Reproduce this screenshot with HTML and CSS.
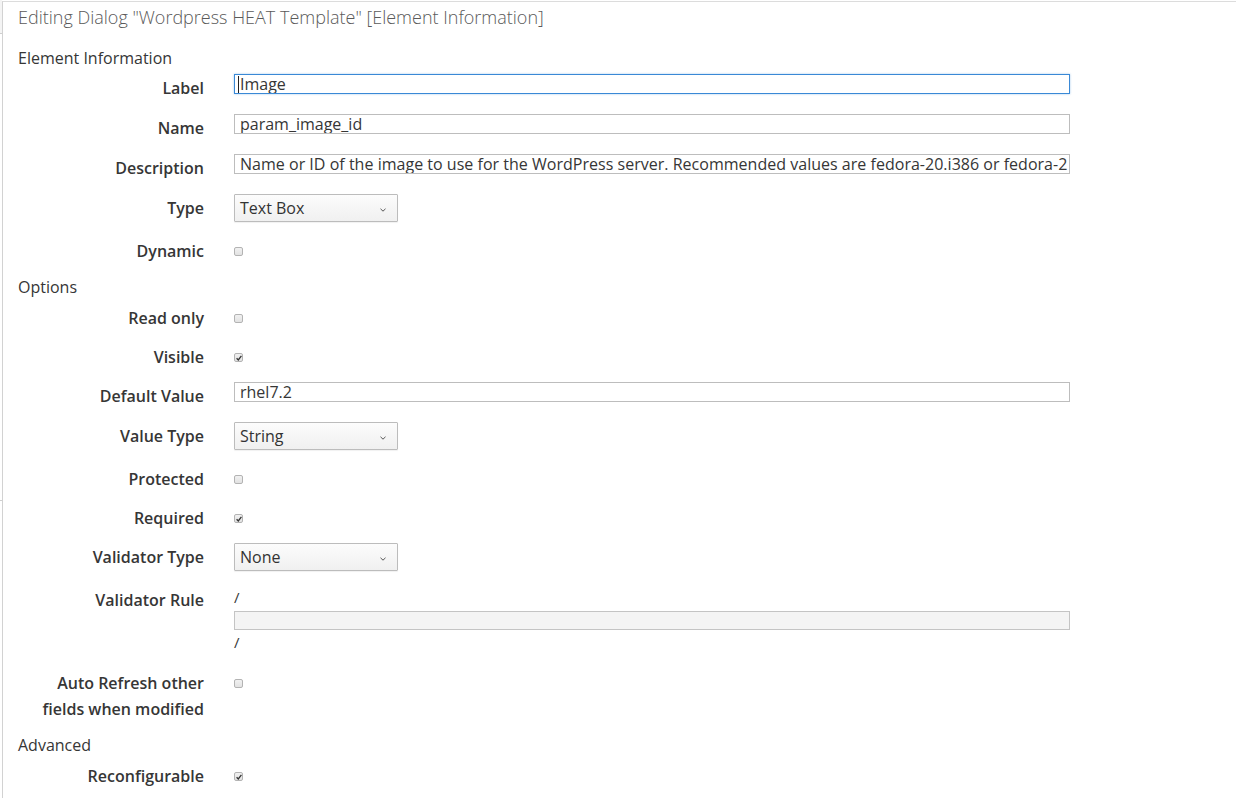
FILE: index.html
```html
<!DOCTYPE html>
<html lang="en">
<head>
<meta charset="utf-8">
<title>Editing Dialog</title>
<link rel="stylesheet" href="styles.css">
</head>
<body>
<div class="page">
  <div class="edge"><div class="edge-a"></div><div class="edge-b"></div></div>
  <main class="panel">
    <h1 class="title">Editing Dialog "Wordpress HEAT Template" [Element Information]</h1>

    <h2 class="section first">Element Information</h2>
    <div class="row text"><div class="lbl">Label</div><div class="ctl"><div class="field focus"><span class="caret"></span>Image</div></div></div>
    <div class="row text"><div class="lbl">Name</div><div class="ctl"><div class="field">param_image_id</div></div></div>
    <div class="row text"><div class="lbl">Description</div><div class="ctl"><div class="field tight">Name or ID of the image to use for the WordPress server. Recommended values are fedora-20.i386 or fedora-2</div></div></div>
    <div class="row"><div class="lbl">Type</div><div class="ctl"><div class="select">Text Box<span class="chev"><svg width="6" height="4" viewBox="0 0 6 4"><path d="M0.5 0.8 L3 3.2 L5.5 0.8" fill="none" stroke="#555" stroke-width="1"/></svg></span></div></div></div>
    <div class="row"><div class="lbl">Dynamic</div><div class="ctl"><span class="cb"></span></div></div>

    <h2 class="section">Options</h2>
    <div class="row"><div class="lbl">Read only</div><div class="ctl"><span class="cb"></span></div></div>
    <div class="row"><div class="lbl">Visible</div><div class="ctl"><span class="cb checked"><svg width="6" height="6" viewBox="0 0 6 6"><path d="M0.6 3.2 L2.3 4.9 L5.4 0.8" fill="none" stroke="#333" stroke-width="1.3"/></svg></span></div></div>
    <div class="row text"><div class="lbl">Default Value</div><div class="ctl"><div class="field">rhel7.2</div></div></div>
    <div class="row"><div class="lbl">Value Type</div><div class="ctl"><div class="select">String<span class="chev"><svg width="6" height="4" viewBox="0 0 6 4"><path d="M0.5 0.8 L3 3.2 L5.5 0.8" fill="none" stroke="#555" stroke-width="1"/></svg></span></div></div></div>
    <div class="row"><div class="lbl">Protected</div><div class="ctl"><span class="cb"></span></div></div>
    <div class="row"><div class="lbl">Required</div><div class="ctl"><span class="cb checked"><svg width="6" height="6" viewBox="0 0 6 6"><path d="M0.6 3.2 L2.3 4.9 L5.4 0.8" fill="none" stroke="#333" stroke-width="1.3"/></svg></span></div></div>
    <div class="row"><div class="lbl">Validator Type</div><div class="ctl"><div class="select">None<span class="chev"><svg width="6" height="4" viewBox="0 0 6 4"><path d="M0.5 0.8 L3 3.2 L5.5 0.8" fill="none" stroke="#555" stroke-width="1"/></svg></span></div></div></div>
    <div class="row rule"><div class="lbl">Validator Rule</div><div class="ctl"><div class="slash">/</div><div class="field disabled"></div><div class="slash">/</div></div></div>
    <div class="row"><div class="lbl">Auto Refresh other fields when modified</div><div class="ctl"><span class="cb"></span></div></div>

    <h2 class="section">Advanced</h2>
    <div class="row"><div class="lbl">Reconfigurable</div><div class="ctl"><span class="cb checked"><svg width="6" height="6" viewBox="0 0 6 6"><path d="M0.6 3.2 L2.3 4.9 L5.4 0.8" fill="none" stroke="#333" stroke-width="1.3"/></svg></span></div></div>
  </main>
</div>
</body>
</html>
```

FILE: styles.css
```css
html, body {
  margin: 0;
  padding: 0;
  background: #fff;
}

body {
  font-family: "Open Sans", "Noto Sans", sans-serif;
  color: #363636;
  overflow: hidden;
}

.page {
  display: flex;
  min-height: 798px;
}

.edge {
  width: 2px;
  flex: none;
}

.edge-a {
  height: 33px;
  border-bottom: 1px solid #cfcfcf;
  background: #f4f4f4;
}

.edge-b {
  height: 466px;
  border-bottom: 1px solid #cfcfcf;
}

.panel {
  flex: 1;
  margin-top: 1px;
  border-top: 1px solid #dcdcdc;
  border-left: 1px solid #d2d2d2;
  padding-left: 15px;
}

.title {
  margin: 0;
  padding-top: 3px;
  font-size: 18px;
  line-height: 24px;
  font-weight: 300;
  color: #5a5a5a;
}

.section {
  margin: 0 0 6px;
  font-size: 16px;
  line-height: 22px;
  font-weight: 400;
  color: #363636;
}

.section.first {
  margin-top: 18px;
  margin-bottom: 5px;
}

.row {
  display: flex;
  align-items: flex-start;
  margin-bottom: 12px;
}

.row.text {
  margin-bottom: 13px;
}

.lbl {
  width: 186px;
  flex: none;
  margin-right: 30px;
  padding-top: 1px;
  text-align: right;
  font-size: 16px;
  line-height: 26px;
  font-weight: 600;
  color: #363636;
}

.ctl {
  width: 836px;
  flex: none;
}

.field {
  box-sizing: border-box;
  height: 20px;
  border: 1px solid #bdbdbd;
  padding: 0 5px;
  font-size: 16px;
  line-height: 18px;
  white-space: nowrap;
  overflow: hidden;
  color: #363636;
  background: #fff;
}

.field.tight {
  letter-spacing: 0.02px;
}

.field.focus {
  border-color: #3a89d6;
  box-shadow: 0 0 2px rgba(58, 137, 214, 0.45);
  padding-left: 3px;
}

.caret {
  display: inline-block;
  width: 1px;
  height: 17px;
  background: #222;
  vertical-align: -3px;
  margin-right: 1px;
}

.field.disabled {
  height: 19px;
  margin: 3px 0 1px;
  background: #f4f4f4;
  border-color: #c4c4c4;
}

.select {
  position: relative;
  box-sizing: border-box;
  width: 164px;
  height: 28px;
  margin-bottom: 3px;
  border: 1px solid #bcbcbc;
  border-radius: 1px;
  padding: 0 5px;
  font-size: 16px;
  line-height: 26px;
  font-weight: 500;
  color: #333;
  background: linear-gradient(#fcfcfc, #f0f0f0);
  box-shadow: 0 1px 1px rgba(0, 0, 0, 0.06);
}

.chev {
  position: absolute;
  right: 11px;
  top: 11px;
  line-height: 0;
}

.cb {
  display: block;
  box-sizing: border-box;
  width: 9px;
  height: 9px;
  margin-top: 10px;
  border: 1px solid #b3b3b3;
  border-radius: 2px;
  background: linear-gradient(#f1f1f1, #e2e2e2);
  line-height: 0;
}

.cb svg {
  display: block;
  margin: 0.5px 0 0 0.5px;
}

.slash {
  font-size: 15px;
  line-height: 22px;
  color: #363636;
}

.row.rule {
  padding-bottom: 4px;
}
```
